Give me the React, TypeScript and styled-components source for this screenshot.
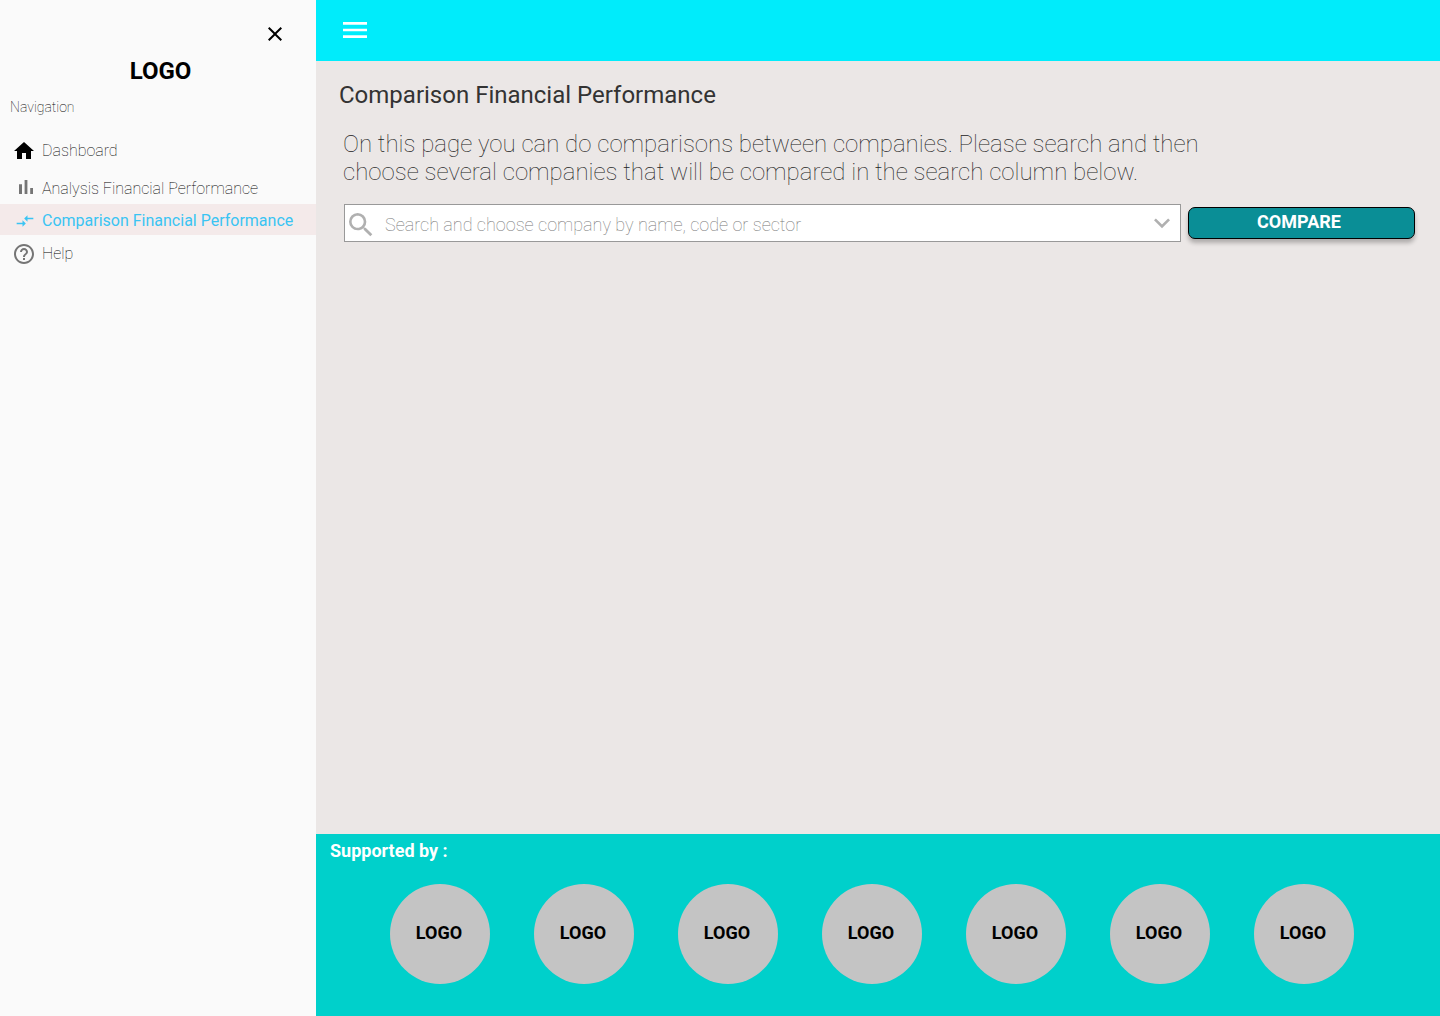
import React, { useState } from 'react';
import styled, { createGlobalStyle } from 'styled-components';
import {
  MdClose,
  MdCompareArrows,
  MdExpandMore,
  MdHelpOutline,
  MdHome,
  MdMenu,
  MdSearch,
} from 'react-icons/md';

const GlobalStyle = createGlobalStyle`
  *, *::before, *::after { box-sizing: border-box; }
  body {
    margin: 0;
    font-family: Roboto, "Liberation Sans", sans-serif;
    color: #000;
  }
  h1, p, ul { margin: 0; padding: 0; }
  ul { list-style: none; }
  svg { display: block; flex: none; }
`;

const Page = styled.div`
  display: grid;
  grid-template-columns: 316px minmax(0, 1fr);
  min-height: 100vh;
`;

const Sidebar = styled.aside`
  display: flex;
  flex-direction: column;
  padding-top: 22px;
  background: #fafafa;
`;

const IconButton = styled.button`
  display: flex;
  align-items: center;
  justify-content: center;
  padding: 0;
  border: 0;
  background: none;
  color: inherit;
  cursor: pointer;
`;

const CloseButton = styled(IconButton)`
  align-self: flex-end;
  margin-right: 29px;
`;

const Brand = styled.div`
  margin-top: 11px;
  padding-left: 5px;
  text-align: center;
  font-size: 24px;
  line-height: 28px;
  font-weight: 700;
`;

const NavHeading = styled.p`
  margin-top: 14px;
  padding-left: 10px;
  font-size: 14px;
  line-height: 16px;
  font-weight: 100;
`;

const NavList = styled.ul`
  display: flex;
  flex-direction: column;
  margin-top: 20px;
`;

const NavItem = styled.li<{ $before: number }>`
  margin-top: ${({ $before }) => $before}px;
`;

const NavLink = styled.a<{ $active?: boolean }>`
  display: flex;
  align-items: center;
  gap: 4px;
  height: 31px;
  padding: ${({ $active }) => ($active ? '2px 0 0 12px' : '0 0 0 12px')};
  background: ${({ $active }) => ($active ? '#f4eaea' : 'transparent')};
  color: ${({ $active }) => ($active ? '#3ac4f3' : '#000')};
  font-size: 16px;
  line-height: 20px;
  font-weight: ${({ $active }) => ($active ? 400 : 100)};
  text-decoration: none;
`;

const NavIcon = styled.span<{ $color: string; $align: string }>`
  display: flex;
  justify-content: ${({ $align }) => $align};
  width: 26px;
  color: ${({ $color }) => $color};
`;

const Content = styled.div`
  display: flex;
  flex-direction: column;
  background: #ebe7e6;
`;

const TopBar = styled.header`
  display: flex;
  align-items: center;
  height: 61px;
  padding: 0 23px 2px;
  background: #00ecfb;
  color: #fff;
`;

const Main = styled.main`
  flex: 1;
  padding: 20px 25px 20px 28px;
`;

const Title = styled.h1`
  margin-left: -5px;
  color: #333;
  font-size: 24px;
  line-height: 28px;
  font-weight: 400;
`;

const Intro = styled.p`
  max-width: 900px;
  margin: 21px 0 18px -1px;
  color: #222;
  font-size: 24px;
  line-height: 28px;
  font-weight: 100;
`;

const SearchForm = styled.form`
  display: flex;
  align-items: center;
  gap: 7px;
`;

const SearchBox = styled.div`
  display: flex;
  flex: 1;
  align-items: center;
  height: 38px;
  padding-right: 2px;
  border: 1px solid #999;
  background: #fff;
  color: #b0b0b0;
`;

const SearchIcon = styled.label`
  display: flex;
  align-self: flex-end;
`;

const SearchInput = styled.input`
  flex: 1;
  min-width: 0;
  height: 36px;
  padding: 2px 8px 0;
  border: 0;
  outline: 0;
  background: transparent;
  color: #000;
  font: 100 18px/22px Roboto, "Liberation Sans", sans-serif;

  &::placeholder {
    color: #777;
    opacity: 1;
  }
`;

const CompareButton = styled.button`
  width: 227px;
  height: 32px;
  padding: 0 6px 2px;
  border: 1px solid #000;
  border-radius: 7px;
  background: #0a8e96;
  box-shadow: 0 4px 4px rgba(0, 0, 0, 0.25);
  color: #fff;
  font: 700 18px/22px Roboto, "Liberation Sans", sans-serif;
  text-indent: -5px;
  cursor: pointer;
`;

const Footer = styled.footer`
  padding: 6px 14px 32px;
  background: #00d0cb;
`;

const FooterTitle = styled.p`
  color: #fff;
  font-size: 18px;
  line-height: 22px;
  font-weight: 700;
`;

const Supporters = styled.ul`
  display: flex;
  justify-content: space-between;
  margin: 22px 72px 0 60px;
`;

const Supporter = styled.li`
  display: flex;
  align-items: center;
  justify-content: center;
  width: 100px;
  height: 100px;
  padding: 0 2px 2px 0;
  border-radius: 50%;
  background: #c4c4c4;
  font-size: 18px;
  line-height: 22px;
  font-weight: 700;
`;

function BarsIcon() {
  return (
    <svg width="24" height="28" viewBox="0 0 24 28" fill="currentColor" aria-hidden="true">
      <path d="M5 9.2h3V19H5zM10.6 5h2.8v14h-2.8zM16.2 13H19v6h-2.8z" />
    </svg>
  );
}

const navItems = [
  { label: 'Dashboard', icon: <MdHome size={24} />, color: '#000', align: 'flex-start', before: 0 },
  { label: 'Analysis Financial Performance', icon: <BarsIcon />, color: '#757575', align: 'flex-end', before: 7 },
  {
    label: 'Comparison Financial Performance',
    icon: <MdCompareArrows size={20} />,
    color: '#3ac4f3',
    align: 'center',
    before: 0,
    active: true,
  },
  { label: 'Help', icon: <MdHelpOutline size={24} />, color: '#757575', align: 'flex-start', before: 3 },
];

const supporters = [1, 2, 3, 4, 5, 6, 7];

export default function App() {
  const [query, setQuery] = useState('');

  return (
    <>
      <GlobalStyle />
      <Page>
        <Sidebar>
          <CloseButton type="button" aria-label="Close navigation">
            <MdClose size={24} />
          </CloseButton>
          <Brand>LOGO</Brand>
          <NavHeading>Navigation</NavHeading>
          <nav aria-label="Navigation">
            <NavList>
              {navItems.map(({ label, icon, color, align, before, active }) => (
                <NavItem key={label} $before={before}>
                  <NavLink href="#" $active={active} aria-current={active ? 'page' : undefined}>
                    <NavIcon $color={color} $align={align}>
                      {icon}
                    </NavIcon>
                    {label}
                  </NavLink>
                </NavItem>
              ))}
            </NavList>
          </nav>
        </Sidebar>
        <Content>
          <TopBar>
            <IconButton type="button" aria-label="Toggle menu">
              <MdMenu size={32} />
            </IconButton>
          </TopBar>
          <Main>
            <Title>Comparison Financial Performance</Title>
            <Intro>
              On this page you can do comparisons between companies. Please search and then choose
              several companies that will be compared in the search column below.
            </Intro>
            <SearchForm onSubmit={(event) => event.preventDefault()}>
              <SearchBox>
                <SearchIcon htmlFor="company-search" aria-label="Search companies">
                  <MdSearch size={32} />
                </SearchIcon>
                <SearchInput
                  id="company-search"
                  type="text"
                  placeholder="Search and choose company by name, code or sector"
                  value={query}
                  onChange={(event) => setQuery(event.target.value)}
                />
                <IconButton type="button" aria-label="Show companies">
                  <MdExpandMore size={32} />
                </IconButton>
              </SearchBox>
              <CompareButton type="submit">COMPARE</CompareButton>
            </SearchForm>
          </Main>
          <Footer>
            <FooterTitle>Supported by :</FooterTitle>
            <Supporters>
              {supporters.map((id) => (
                <Supporter key={id}>LOGO</Supporter>
              ))}
            </Supporters>
          </Footer>
        </Content>
      </Page>
    </>
  );
}
